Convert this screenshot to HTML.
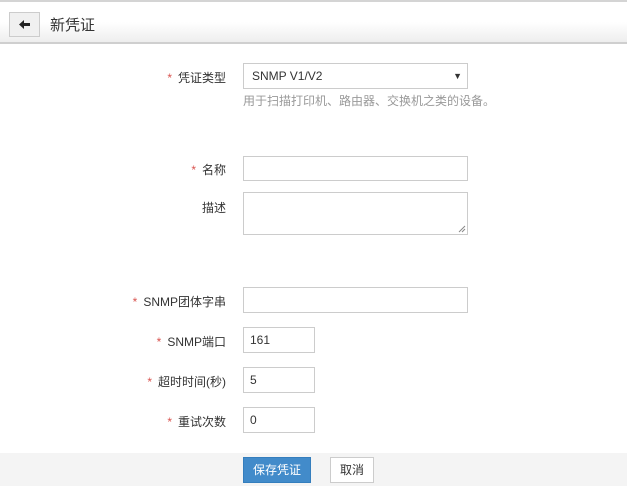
<!DOCTYPE html><html><head><meta charset="utf-8"><style>
body{margin:0;width:627px;height:486px;position:relative;overflow:hidden;background:#fff;font-family:"Liberation Sans","Noto Sans CJK SC",sans-serif;font-size:12px;color:#333}
.hdr{position:absolute;left:0;top:0;width:627px;height:44px;border-top:2px solid #d4d4d4;border-bottom:2px solid #cfcfcf;background:linear-gradient(#fff,#fff 50%,#eee);box-sizing:border-box}
.back{position:absolute;left:9px;top:10px;width:31px;height:25px;border:1px solid #ccc;box-sizing:border-box;background:#f0f0f0}
.title{position:absolute;left:50px;top:12px;font-size:15px;color:#333}
.lbl{position:absolute;right:401px;text-align:right;white-space:nowrap}
.lbl i{color:#d9534f;font-style:normal;margin-right:6px}
.in{position:absolute;left:243px;border:1px solid #ccc;box-sizing:border-box;background:#fff;padding-left:6px;line-height:25px}
.foot{position:absolute;left:0;top:453px;width:627px;height:33px;background:#f4f4f4}
.btn{position:absolute;top:457px;height:26px;box-sizing:border-box;line-height:24px;text-align:center;font-size:12px}
</style></head><body>
<div class="hdr"><div class="back"><svg width="31" height="25" style="position:absolute;left:-1px;top:-1px"><path d="M10 12.5 L15 8 L15 11 L21 11 L21 14 L15 14 L15 17 Z" fill="#222"/></svg></div><div class="title">新凭证</div></div>
<div class="lbl" style="top:69px"><i>*</i>凭证类型</div>
<div class="in" style="top:63px;width:225px;height:26px;padding-left:8px">SNMP V1/V2<span style="position:absolute;right:5px;top:0;font-size:9px">▼</span></div>
<div style="position:absolute;left:243px;top:92px;color:#999">用于扫描打印机、路由器、交换机之类的设备。</div>
<div class="lbl" style="top:161px"><i>*</i>名称</div>
<div class="in" style="top:156px;width:225px;height:25px"></div>
<div class="lbl" style="top:199px">描述</div>
<div class="in" style="top:192px;width:225px;height:43px"><svg width="8" height="8" style="position:absolute;right:1px;bottom:1px"><path d="M1 7L7 1M4 7L7 4" stroke="#888"/></svg></div>
<div class="lbl" style="top:293px"><i>*</i>SNMP团体字串</div>
<div class="in" style="top:287px;width:225px;height:26px"></div>
<div class="lbl" style="top:333px"><i>*</i>SNMP端口</div>
<div class="in" style="top:327px;width:72px;height:26px">161</div>
<div class="lbl" style="top:373px"><i>*</i>超时时间(秒)</div>
<div class="in" style="top:367px;width:72px;height:26px">5</div>
<div class="lbl" style="top:413px"><i>*</i>重试次数</div>
<div class="in" style="top:407px;width:72px;height:26px">0</div>
<div class="foot"></div>
<div class="btn" style="left:243px;width:68px;background:#428bca;border:1px solid #357ebd;color:#fff">保存凭证</div>
<div class="btn" style="left:330px;width:44px;background:#fff;border:1px solid #ccc;color:#333">取消</div>
</body></html>
